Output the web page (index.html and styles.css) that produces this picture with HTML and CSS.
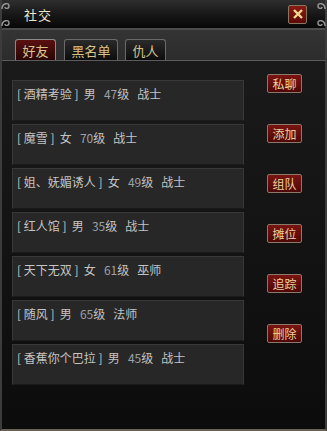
FILE: index.html
```html
<!DOCTYPE html>
<html lang="zh">
<head>
    <meta charset="UTF-8">
    <title>社交</title>
    <link rel="stylesheet" href="styles.css">
</head>
<body>
    <div class="window">
        <div class="titlebar">
            <svg class="curl curl-tl" viewBox="0 0 10 10"><path d="M1 8 C1 2 8 1 8 5 C8 8 4 8 4 6" /></svg>
            <svg class="curl curl-bl" viewBox="0 0 10 10"><path d="M1 8 C1 2 8 1 8 5 C8 8 4 8 4 6" /></svg>
            <svg class="curl curl-tr" viewBox="0 0 10 10"><path d="M9 8 C9 2 2 1 2 5 C2 8 6 8 6 6" /></svg>
            <svg class="curl curl-br" viewBox="0 0 10 10"><path d="M9 8 C9 2 2 1 2 5 C2 8 6 8 6 6" /></svg>
            <span class="title">社交</span>
            <button class="close">
                <svg viewBox="0 0 12 12"><path d="M2 2 L10 10 M10 2 L2 10" /></svg>
            </button>
        </div>

        <div class="tabbar">
            <div class="tab active">好友</div>
            <div class="tab wide">黑名单</div>
            <div class="tab">仇人</div>
        </div>

        <div class="content">
            <div class="rows">
                <div class="row">[ 酒精考验 ]&nbsp; 男&nbsp;&nbsp; <span class="lv">47</span>级&nbsp;&nbsp; 战士</div>
                <div class="row">[ 魔雪 ]&nbsp; 女&nbsp;&nbsp; <span class="lv">70</span>级&nbsp;&nbsp; 战士</div>
                <div class="row">[ 姐、妩媚诱人 ]&nbsp; 女&nbsp;&nbsp; <span class="lv">49</span>级&nbsp;&nbsp; 战士</div>
                <div class="row">[ 红人馆 ]&nbsp; 男&nbsp;&nbsp; <span class="lv">35</span>级&nbsp;&nbsp; 战士</div>
                <div class="row">[ 天下无双 ]&nbsp; 女&nbsp;&nbsp; <span class="lv">61</span>级&nbsp;&nbsp; 巫师</div>
                <div class="row">[ 随风 ]&nbsp; 男&nbsp;&nbsp; <span class="lv">65</span>级&nbsp;&nbsp; 法师</div>
                <div class="row">[ 香蕉你个巴拉 ]&nbsp; 男&nbsp;&nbsp; <span class="lv">45</span>级&nbsp;&nbsp; 战士</div>
            </div>
            <div class="actions">
                <button class="action">私聊</button>
                <button class="action">添加</button>
                <button class="action">组队</button>
                <button class="action">摊位</button>
                <button class="action">追踪</button>
                <button class="action">删除</button>
            </div>
        </div>
    </div>
</body>
</html>
```

FILE: styles.css
```css
body {
    margin: 0;
    background-color: #000;
    font-family: "Noto Sans CJK SC", "DejaVu Sans", sans-serif;
}

.window {
    width: 327px;
    height: 431px;
    box-sizing: border-box;
    background: linear-gradient(#1c1c1c, #111 70%, #0c0c0c);
    border-left: 2px solid #3c3c3c;
    border-right: 2px solid #3c3c3c;
    border-bottom: 2px solid #6a6250;
    display: flex;
    flex-direction: column;
}

.titlebar {
    position: relative;
    height: 28px;
    flex-shrink: 0;
    background: linear-gradient(#2e2e2e, #141414 60%, #080808);
    border-bottom: 2px solid #4c4c4c;
    display: flex;
    align-items: center;
    padding: 0 18px 0 22px;
}

.title {
    color: #ece4cc;
    font-size: 13px;
    letter-spacing: 1px;
    flex: 1;
}

.curl {
    position: absolute;
    width: 10px;
    height: 10px;
    fill: none;
    stroke: #9a9a9a;
    stroke-width: 1.4;
}

.curl-tl { left: -1px; top: 1px; }
.curl-bl { left: -1px; top: 18px; }
.curl-tr { right: -1px; top: 1px; }
.curl-br { right: -1px; top: 18px; }

.close {
    width: 19px;
    height: 19px;
    padding: 0;
    border: 1px solid #8a7462;
    border-radius: 2px;
    background: linear-gradient(#8a1a12, #5c0a08);
    display: flex;
    align-items: center;
    justify-content: center;
}

.close svg {
    width: 12px;
    height: 12px;
    stroke: #f4d890;
    stroke-width: 2.4;
}

.tabbar {
    height: 31px;
    flex-shrink: 0;
    background: linear-gradient(#343434, #2c2c2c);
    border-bottom: 1px solid #5c5c5c;
    display: flex;
    align-items: flex-end;
    gap: 7px;
    padding-left: 13px;
    box-sizing: border-box;
}

.tab {
    width: 41px;
    height: 21px;
    box-sizing: border-box;
    border: 1px solid #6a6a6a;
    border-bottom: none;
    border-radius: 3px 3px 0 0;
    background: linear-gradient(#2a2a2a, #0c0c0c);
    color: #d8c38a;
    font-size: 13px;
    line-height: 21px;
    text-align: center;
}

.tab.wide {
    width: 54px;
}

.tab.active {
    margin-right: 1px;
    border-color: #8a8a8a;
    background: linear-gradient(#5a1010, #2a0606);
}

.content {
    flex: 1;
    display: flex;
    padding: 0 0 0 10px;
}

.rows {
    width: 232px;
    padding-top: 19px;
    display: flex;
    flex-direction: column;
    gap: 3px;
}

.row {
    height: 41px;
    box-sizing: border-box;
    background-color: #272727;
    border: 1px solid #383838;
    border-bottom-color: #1a1a1a;
    color: #c4c4c4;
    font-size: 12px;
    line-height: 12px;
    padding: 7px 0 0 4px;
    white-space: nowrap;
}

.lv {
    color: #9da0a8;
}

.actions {
    margin-left: 23px;
    padding-top: 13px;
    display: flex;
    flex-direction: column;
    gap: 31px;
}

.action {
    width: 35px;
    height: 19px;
    padding: 0;
    border: 1px solid #8a7868;
    border-radius: 2px;
    background: linear-gradient(#7a1410, #4e0806);
    color: #ecd49c;
    font-family: inherit;
    font-size: 12px;
    line-height: 17px;
}
```
